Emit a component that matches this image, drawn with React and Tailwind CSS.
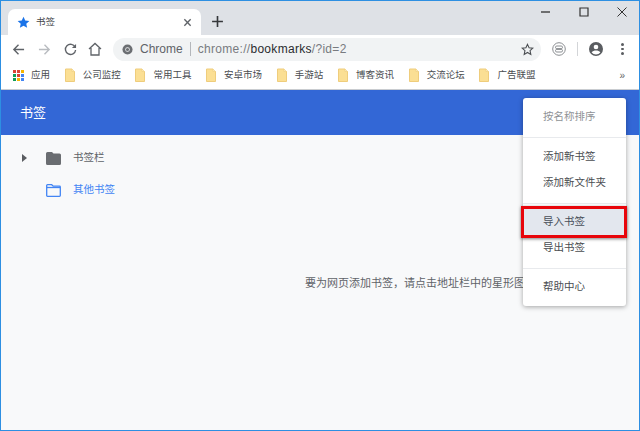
import React from "react";

const font = { fontFamily: '"Liberation Sans", "Noto Sans CJK SC", sans-serif' };

function Folder() {
  return (
    <svg width="10" height="14" viewBox="0 0 10 14" className="shrink-0">
      <path d="M0.5 1h6.5l2.5 2.5v10h-9z" fill="#fbdf94" stroke="#efcd7c" strokeWidth="1" />
      <path d="M7 1v2.5h2.5" fill="#fdeec2" stroke="#efcd7c" strokeWidth="0.6" />
    </svg>
  );
}

function AppsIcon() {
  const colors = ["#db4437", "#db4437", "#f4b400", "#0f9d58", "#db4437", "#4285f4", "#0f9d58", "#f4b400", "#4285f4"];
  return (
    <div className="grid grid-cols-3 gap-[1px] w-[11px] h-[11px] shrink-0">
      {colors.map((c, i) => (
        <span key={i} className="w-[3px] h-[3px]" style={{ backgroundColor: c }} />
      ))}
    </div>
  );
}

function Bookmark({ label }) {
  return (
    <div className="flex items-center gap-[8px] ml-[14.700px]">
      <Folder />
      <span className="text-[9.500px] text-[#4a4d51] whitespace-nowrap">{label}</span>
    </div>
  );
}

function TitleBar() {
  return (
    <div className="h-[34px] bg-[#dee1e6] flex items-end pl-[7px] relative">
      <div className="w-[193px] h-[26px] bg-white rounded-t-[7px] flex items-center pl-[9px] pr-[9px]">
        <svg width="13" height="13" viewBox="0 0 24 24" fill="#1a73e8">
          <path d="M12 1.500l3.200 7 7.600.8-5.700 5.100 1.600 7.500L12 18l-6.700 3.900 1.600-7.500L1.200 9.300l7.600-.8z" />
        </svg>
        <span className="ml-[6px] text-[9.500px] text-[#45484c]">书签</span>
        <svg width="9" height="9" viewBox="0 0 10 10" className="ml-auto" stroke="#5f6368" strokeWidth="1.500">
          <path d="M1.500 1.500l7 7M8.500 1.500l-7 7" />
        </svg>
      </div>
      <svg width="13" height="13" viewBox="0 0 12 12" className="ml-[10px] mb-[7px]" stroke="#35373a" strokeWidth="1.500">
        <path d="M6 1v10M1 6h10" />
      </svg>
      <div className="ml-auto self-start flex items-center h-[22px]">
        <svg width="10" height="10" viewBox="0 0 10 10" stroke="#222" strokeWidth="1.200">
          <path d="M0 5h9" />
        </svg>
        <svg width="10" height="10" viewBox="0 0 10 10" className="ml-[28px]" fill="none" stroke="#333" strokeWidth="1.200">
          <path d="M1 1h8v8H1z" />
        </svg>
        <svg width="10" height="10" viewBox="0 0 10 10" className="ml-[28px] mr-[12px]" stroke="#333" strokeWidth="1">
          <path d="M.5.500l9 9M9.500.500l-9 9" />
        </svg>
      </div>
    </div>
  );
}

function Toolbar() {
  return (
    <div className="h-[28px] bg-white flex items-center pl-[11px]">
      <svg width="13" height="13" viewBox="0 0 14 14" fill="none" stroke="#5f6368" strokeWidth="1.500">
        <path d="M13 7H2M7 2L2 7l5 5" />
      </svg>
      <svg width="13" height="13" viewBox="0 0 14 14" fill="none" stroke="#b9bcc0" strokeWidth="1.500" className="ml-[13px]">
        <path d="M1 7h11M7 2l5 5-5 5" />
      </svg>
      <svg width="13" height="13" viewBox="0 0 14 14" fill="none" stroke="#5f6368" strokeWidth="1.500" className="ml-[13px]">
        <path d="M12 4.500A5.500 5.500 0 1 0 12.500 7.500" />
        <path d="M13 1v4.500H8.500z" fill="#5f6368" stroke="none" />
      </svg>
      <svg width="14" height="14" viewBox="0 0 14 14" fill="none" stroke="#5f6368" strokeWidth="1.300" className="ml-[11px]">
        <path d="M1 7l6-5.500L13 7M3 6v7h8V6" />
      </svg>
      <div className="ml-[11px] w-[428px] h-[23px] rounded-full bg-[#f1f3f4] flex items-center pl-[9px] pr-[7px]">
        <svg width="11" height="11" viewBox="0 0 12 12">
          <circle cx="6" cy="6" r="5.500" fill="#6b6e72" />
          <circle cx="6" cy="6" r="2.500" fill="#f1f3f4" />
          <circle cx="6" cy="6" r="1.700" fill="#6b6e72" />
        </svg>
        <span className="ml-[7px] text-[12px] text-[#5f6368]">Chrome</span>
        <span className="ml-[7px] w-px h-[14px] bg-[#b4b7bb]" />
        <span className="ml-[7px] text-[12px] tracking-[0.3px] text-[#787b80] whitespace-nowrap">
          chrome://<span className="text-[#2a2c2f]">bookmarks</span>/?id=2
        </span>
        <svg width="13" height="13" viewBox="0 0 24 24" fill="none" stroke="#4a4d51" strokeWidth="2" className="ml-auto">
          <path d="M12 2.500l2.900 6.300 6.900.8-5.100 4.600 1.400 6.800L12 17.500 5.900 21l1.400-6.800-5.100-4.600 6.900-.8z" />
        </svg>
      </div>
      <svg width="14" height="14" viewBox="0 0 14 14" fill="none" stroke="#8a8d91" className="ml-[11px]">
        <circle cx="7" cy="7" r="6.300" />
        <rect x="3.500" y="4" width="7" height="2.600" rx="1.300" />
        <rect x="3.500" y="7.400" width="7" height="2.600" rx="1.300" />
      </svg>
      <span className="ml-[11px] w-px h-[14px] bg-[#d3d5d8]" />
      <svg width="14" height="14" viewBox="0 0 24 24" fill="#5a5d61" className="ml-[11px]">
        <path d="M12 0a12 12 0 1 0 0 24 12 12 0 0 0 0-24zm0 4.500a4 4 0 1 1 0 8 4 4 0 0 1 0-8zm0 17a9.500 9.500 0 0 1-7.500-3.700c1.500-2.300 4.500-3.300 7.500-3.300s6 1 7.500 3.300A9.500 9.500 0 0 1 12 21.500z" />
      </svg>
      <div className="ml-[18px] flex flex-col gap-[2px]">
        <span className="w-[2.500px] h-[2.500px] rounded-full bg-[#5a5d61]" />
        <span className="w-[2.500px] h-[2.500px] rounded-full bg-[#5a5d61]" />
        <span className="w-[2.500px] h-[2.500px] rounded-full bg-[#5a5d61]" />
      </div>
    </div>
  );
}

function BookmarksBar() {
  return (
    <div className="h-[27px] bg-white border-b border-[#c9ccd0] flex items-center pl-[12px] pb-[2px]">
      <AppsIcon />
      <span className="ml-[7px] text-[9.500px] text-[#4a4d51]">应用</span>
      <Bookmark label="公司监控" />
      <Bookmark label="常用工具" />
      <Bookmark label="安卓市场" />
      <Bookmark label="手游站" />
      <Bookmark label="博客资讯" />
      <Bookmark label="交流论坛" />
      <Bookmark label="广告联盟" />
      <span className="ml-auto mr-[14px] text-[10px] text-[#5a5d61]">»</span>
    </div>
  );
}

function MenuItem({ children, muted }) {
  return (
    <div className={"h-[26px] pl-[20px] flex items-center text-[10.500px] " + (muted ? "text-[#8f9296]" : "text-[#4a4d51]")}>
      {children}
    </div>
  );
}

function Menu() {
  return (
    <div className="absolute left-[522px] top-[97px] w-[103px] h-[208px] bg-white rounded-[3px] shadow-[0_1px_5px_rgba(0,0,0,0.35)] pt-[6px] z-10">
      <MenuItem muted>按名称排序</MenuItem>
      <div className="h-px bg-[#e8eaed] mt-[7px] mb-[6px]" />
      <MenuItem>添加新书签</MenuItem>
      <MenuItem>添加新文件夹</MenuItem>
      <div className="h-px bg-[#e8eaed] mt-[7px] mb-[5px]" />
      <MenuItem>导入书签</MenuItem>
      <MenuItem>导出书签</MenuItem>
      <div className="h-px bg-[#e8eaed] mt-[7px] mb-[5px]" />
      <MenuItem>帮助中心</MenuItem>
      {/* red annotation box drawn on the screenshot */}
      <div className="absolute left-[-2px] top-[108px] w-[106px] h-[32px] border-[3px] border-[#e8050b] bg-[#45608f]/15 shadow-[0_1px_3px_rgba(0,0,0,0.5)]" />
    </div>
  );
}

function Sidebar() {
  return (
    <div className="w-[304px] shrink-0 pt-[7px]">
      <div className="h-[32px] flex items-center pl-[21px]">
        <svg width="5" height="8" viewBox="0 0 5 8" fill="#5a5d61">
          <path d="M0 0l5 4-5 4z" />
        </svg>
        <svg width="15" height="13" viewBox="0 0 15 13" fill="#6a6d71" className="ml-[19px]">
          <path d="M0 1.500A1.500 1.500 0 0 1 1.500 0H6l1.500 1.500h6A1.500 1.500 0 0 1 15 3v8.500a1.500 1.500 0 0 1-1.500 1.500h-12A1.500 1.500 0 0 1 0 11.500z" />
        </svg>
        <span className="ml-[12px] text-[10.500px] text-[#5f6368]">书签栏</span>
      </div>
      <div className="h-[32px] flex items-center pl-[45px]">
        <svg width="15" height="13" viewBox="0 0 15 13" fill="none" stroke="#4285f4" strokeWidth="1.300">
          <path d="M.7 1.500A.8.800 0 0 1 1.500.7h4.200l1.500 1.500h6.300a.8.800 0 0 1 .8.800v8.500a.8.800 0 0 1-.8.800h-12a.8.800 0 0 1-.8-.8z" />
          <path d="M1 3.500h13" />
        </svg>
        <span className="ml-[12px] text-[10.500px] text-[#4285f4]">其他书签</span>
      </div>
    </div>
  );
}

export default function App() {
  return (
    <div className="w-[640px] h-[431px] overflow-hidden relative border border-[#2d8fe2] flex flex-col" style={font}>
      <TitleBar />
      <Toolbar />
      <BookmarksBar />
      <div className="h-[45px] bg-[#3367d6] flex items-center pl-[19px] text-[13px] text-white">书签</div>
      <div className="flex-1 bg-[#f8f9fa] flex">
        <Sidebar />
        <div className="pt-[140px] text-[11px] text-[#5f6368] whitespace-nowrap">要为网页添加书签，请点击地址栏中的星形图标</div>
      </div>
      <Menu />
    </div>
  );
}
